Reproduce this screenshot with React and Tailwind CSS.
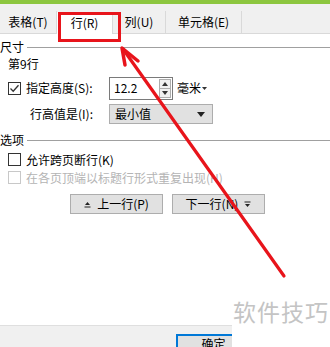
import React from 'react';

const font = { fontFamily: '"Noto Sans CJK SC", "Noto Sans", sans-serif' };

const Check = ({ checked, disabled }) => (
  <div
    className={
      'w-[13px] h-[13px] border bg-white flex items-center justify-center shrink-0 ' +
      (disabled ? 'border-[#c8c8c8]' : 'border-[#333333]')
    }
  >
    {checked && (
      <svg width="11" height="11" viewBox="0 0 11 11">
        <path d="M1.5 5.5 L4.2 8.2 L9.5 2.2" fill="none" stroke="#333" strokeWidth="1.3" />
      </svg>
    )}
  </div>
);

const Tab = ({ label, active, className }) => (
  <div
    className={
      'h-[22px] flex items-center justify-center text-[12px] border-r border-[#d9d9d9] ' +
      (active ? 'bg-white -mb-px' : 'bg-[#f0f0f0]') +
      ' ' +
      className
    }
  >
    {label}
  </div>
);

const Section = ({ title }) => (
  <div className="flex items-center h-[14px] text-[12px]">
    <span>{title}</span>
    <div className="flex-1 h-px bg-[#a0a0a0] ml-[3px]" />
  </div>
);

export default function App() {
  return (
    <div className="relative w-[330px] h-[347px] overflow-hidden bg-white text-black leading-none" style={font}>
      {/* green title strip */}
      <div className="h-[4px] bg-[#8cc63f]" />

      {/* tabs */}
      <div className="h-[30px] bg-[#f0f0f0] border-b border-[#d9d9d9] flex items-end">
        <Tab label="表格(T)" className="w-[57px]" />
        <Tab label="行(R)" active className="w-[56px]" />
        <Tab label="列(U)" className="w-[53px]" />
        <Tab label="单元格(E)" className="w-[76px]" />
      </div>

      {/* content */}
      <div className="pt-[6px]">
        <Section title="尺寸" />
        <div className="pl-[8px] mt-[4px] h-[14px] text-[12px]">第9行</div>

        <div className="flex items-center pl-[8px] mt-[4px] h-[24px]">
          <Check checked />
          <span className="ml-[5px] text-[12px] w-[83px]">指定高度(S):</span>
          <div className="flex items-center w-[64px] h-[23px] border border-[#7a7a7a] bg-white">
            <span className="flex-1 pl-[4px] text-[12px]">12.2</span>
            <div className="w-[12px] h-[19px] mr-[1px] border border-[#adadad] bg-[#f0f0f0] flex flex-col">
              <div className="flex-1 flex items-center justify-center border-b border-[#adadad]">
                <svg width="6" height="4" viewBox="0 0 6 4"><path d="M0 4 L3 0 L6 4Z" fill="#333" /></svg>
              </div>
              <div className="flex-1 flex items-center justify-center">
                <svg width="6" height="4" viewBox="0 0 6 4"><path d="M0 0 L3 4 L6 0Z" fill="#333" /></svg>
              </div>
            </div>
          </div>
          <span className="ml-[4px] text-[12px]">毫米</span>
          <svg className="ml-[1px]" width="5" height="3" viewBox="0 0 5 3"><path d="M0 0 L2.5 3 L5 0Z" fill="#333" /></svg>
        </div>

        <div className="flex items-center pl-[30px] mt-[4px] h-[20px]">
          <span className="text-[12px] w-[79px]">行高值是(I):</span>
          <div className="flex items-center w-[104px] h-[20px] border border-[#adadad] bg-[#e1e1e1] pl-[5px] pr-[7px]">
            <span className="flex-1 text-[12px]">最小值</span>
            <svg width="8" height="5" viewBox="0 0 8 5"><path d="M0 0 L4 5 L8 0Z" fill="#222" /></svg>
          </div>
        </div>

        <div className="mt-[9px]">
          <Section title="选项" />
        </div>

        <div className="flex items-center pl-[8px] mt-[6px] h-[13px]">
          <Check />
          <span className="ml-[5px] text-[12px]">允许跨页断行(K)</span>
        </div>
        <div className="flex items-center pl-[8px] mt-[5px] h-[13px]">
          <Check disabled />
          <span className="ml-[5px] text-[12px] text-[#b4b4b4]">在各页顶端以标题行形式重复出现(H)</span>
        </div>

        <div className="flex pl-[70px] gap-[9px] mt-[10px]">
          <div className="w-[93px] h-[20px] border border-[#adadad] bg-[#e1e1e1] flex items-center justify-center text-[12px]">
            <svg className="mr-[6px]" width="7" height="7" viewBox="0 0 7 7">
              <path d="M1 4 L3.5 1 L6 4Z" fill="#222" />
              <rect x="0.5" y="5.5" width="6" height="1" fill="#222" />
            </svg>
            上一行(P)
          </div>
          <div className="w-[93px] h-[20px] border border-[#adadad] bg-[#e1e1e1] flex items-center justify-center text-[12px]">
            下一行(N)
            <svg className="ml-[6px]" width="7" height="7" viewBox="0 0 7 7">
              <rect x="0.5" y="0.5" width="6" height="1" fill="#222" />
              <path d="M1 3 L3.5 6 L6 3Z" fill="#222" />
            </svg>
          </div>
        </div>
      </div>

      {/* footer */}
      <div className="absolute left-0 right-0 bottom-0 h-[22px] bg-[#f0f0f0] border-t border-[#dfdfdf]">
        <div className="absolute left-[176px] top-[8px] w-[75px] h-[24px] border-2 border-[#0078d7] bg-[#e1e1e1] flex justify-center pt-[2px] text-[12px]">
          确定
        </div>
      </div>

      {/* watermark */}
      <div className="absolute left-[232px] top-[296px] right-0 bottom-0 bg-white flex items-start justify-center pt-[4px]">
        <span className="text-[23px] text-[#c4c4c4] tracking-[1px]">软件技巧</span>
      </div>

      {/* red highlight box */}
      <div className="absolute left-[58px] top-[12px] w-[63px] h-[30px] border-[3px] border-[#e8141b]" />

      {/* red arrow */}
      <svg className="absolute left-0 top-0 pointer-events-none" width="330" height="347" viewBox="0 0 330 347">
        <line x1="284" y1="276" x2="123" y2="49" stroke="#e8141b" strokeWidth="3.2" strokeLinecap="round" />
        <polyline points="125,65 122,48 138,61" fill="none" stroke="#e8141b" strokeWidth="3.5" strokeLinecap="round" strokeLinejoin="round" />
      </svg>
    </div>
  );
}
